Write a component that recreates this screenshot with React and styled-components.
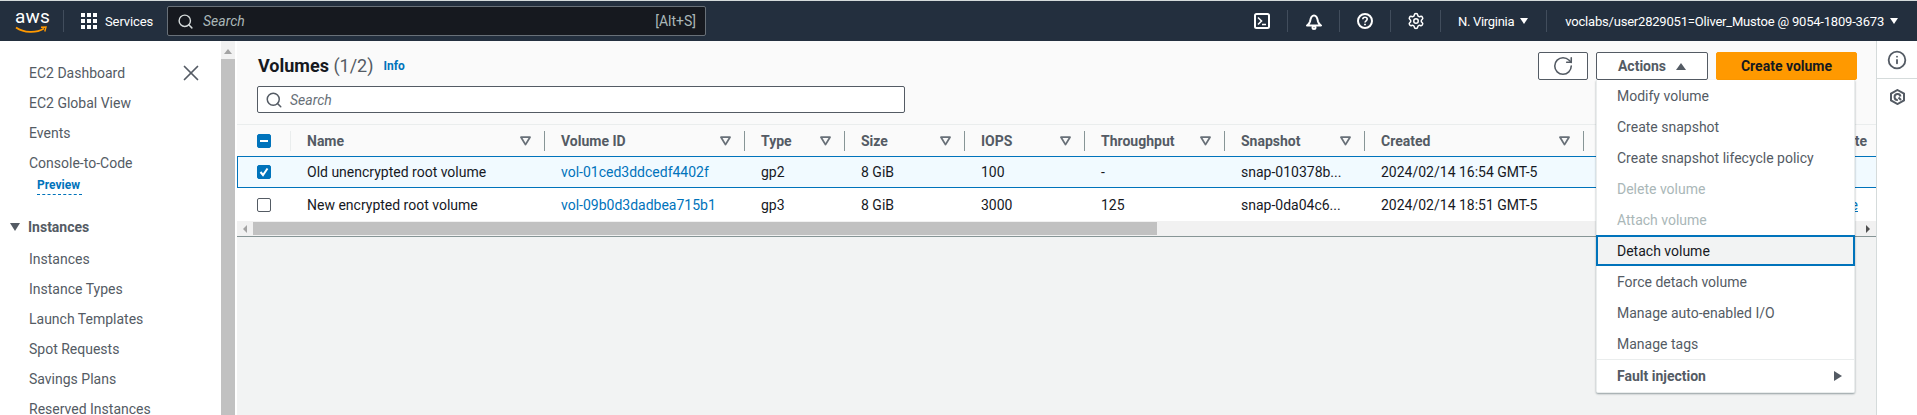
import React from "react";
import styled, { createGlobalStyle } from "styled-components";
import { Search, X, RotateCw, Settings, Info } from "lucide-react";

const GlobalStyle = createGlobalStyle`
  html, body {
    margin: 0;
    padding: 0;
    height: 415px;
    overflow: hidden;
    background: #fff;
    font-family: Roboto, "Liberation Sans", sans-serif;
    font-size: 14px;
    color: #16191f;
  }
`;

const Page = styled.div`
  display: flex;
  flex-direction: column;
  width: 1917px;
  height: 415px;
  overflow: hidden;
`;

const TopBar = styled.header`
  display: flex;
  align-items: center;
  height: 40px;
  margin-top: 1px;
  background: #232f3e;
  color: #fff;
  box-shadow: 0 -1px 0 #d5dbdb;
`;

const Logo = styled.div`
  position: relative;
  width: 32px;
  height: 28px;
  margin-left: 15px;
  font-size: 19px;
  line-height: 20px;
  letter-spacing: 0.2px;
  text-align: center;
  svg {
    position: absolute;
    left: 0;
    bottom: 1px;
  }
`;

const BarSep = styled.span`
  width: 1px;
  height: 22px;
  background: #414d5c;
  margin-left: 16px;
`;

const ServicesBtn = styled.div`
  display: flex;
  align-items: center;
  gap: 8px;
  margin-left: 17px;
  width: 69px;
  font-size: 13px;
  letter-spacing: -0.1px;
  white-space: nowrap;
`;

const GridDots = styled.div`
  display: grid;
  grid-template-columns: repeat(3, 4px);
  gap: 2px;
  span {
    width: 4px;
    height: 4px;
    background: #fff;
  }
`;

const GlobalSearch = styled.div`
  display: flex;
  align-items: center;
  box-sizing: border-box;
  width: 539px;
  height: 30px;
  margin-left: 17px;
  padding: 0 9px;
  background: #16191f;
  border: 1px solid #687078;
  border-radius: 2px;
  color: #aab7b8;
  em {
    margin-left: 9px;
    flex: 1;
  }
`;

const BarRight = styled.div`
  display: flex;
  align-items: center;
  margin-left: auto;
`;

const IconSlot = styled.div`
  display: flex;
  justify-content: center;
  align-items: center;
  width: ${(p) => p.$w}px;
  height: 22px;
  border-right: 1px solid #414d5c;
`;

const RegionText = styled.div`
  display: flex;
  align-items: center;
  gap: 6px;
  font-size: 13px;
  white-space: nowrap;
  padding: 0 ${(p) => p.$right}px 0 ${(p) => p.$left}px;
  letter-spacing: ${(p) => p.$track}px;
`;

const RegionSlot = styled(RegionText)`
  height: 22px;
  border-right: 1px solid #414d5c;
`;

const Caret = styled.span`
  width: 0;
  height: 0;
  border-left: 4px solid transparent;
  border-right: 4px solid transparent;
  border-top: 6px solid currentColor;
`;

const NavCaret = styled(Caret)`
  border-left-width: 5px;
  border-right-width: 5px;
  border-top-width: 8px;
`;

const Body = styled.div`
  display: flex;
  flex: 1;
  min-height: 0;
`;

const SideNav = styled.nav`
  width: 221px;
  flex-shrink: 0;
  box-sizing: border-box;
  padding-top: 17px;
  position: relative;
  color: #545b64;
  overflow: hidden;
`;

const NavItem = styled.div`
  height: 30px;
  line-height: 30px;
  padding-left: 29px;
`;

const Preview = styled.div`
  margin: -2px 0 17px 37px;
  height: 19px;
  line-height: 19px;
  width: 45px;
  box-sizing: border-box;
  font-size: 12px;
  font-weight: 700;
  color: #0073bb;
  border-bottom: 1px dashed #0073bb;
`;

const NavHead = styled.div`
  display: flex;
  align-items: center;
  height: 30px;
  gap: 8px;
  margin-bottom: 2px;
  padding-left: 10px;
  font-weight: 700;
  color: #545b64;
`;

const CloseBtn = styled.div`
  position: absolute;
  left: 178px;
  top: 19px;
  color: #545b64;
  line-height: 0;
`;

const VScroll = styled.div`
  width: 14px;
  flex-shrink: 0;
  margin-right: 2px;
  background: #f1f1f1;
  display: flex;
  flex-direction: column;
`;

const ArrowUp = styled.div`
  height: 18px;
  display: flex;
  justify-content: center;
  padding-top: 8px;
  box-sizing: border-box;
  &::before {
    content: "";
    border-left: 4px solid transparent;
    border-right: 4px solid transparent;
    border-bottom: 5px solid #a3a3a3;
    height: 0;
  }
`;

const VThumb = styled.div`
  flex: 1;
  background: #c1c1c1;
`;

const Main = styled.main`
  position: relative;
  flex: 1;
  min-width: 0;
  display: flex;
  flex-direction: column;
  background: #f2f3f3;
`;

const Heading = styled.section`
  box-sizing: border-box;
  height: 83px;
  padding: 11px 19px 0 20px;
  background: #fafafa;
`;

const TitleRow = styled.div`
  display: flex;
  align-items: flex-start;
  height: 34px;
`;

const Title = styled.h1`
  margin: 2px 0 0 1px;
  font-size: 18px;
  line-height: 24px;
  font-weight: 700;
  color: #16191f;
  span {
    font-weight: 400;
    color: #545b64;
  }
`;

const InfoLink = styled.a`
  margin: 7px 0 0 10px;
  font-size: 12px;
  font-weight: 700;
  color: #0073bb;
`;

const Buttons = styled.div`
  display: flex;
  margin-left: auto;
`;

const Button = styled.div`
  display: flex;
  align-items: center;
  justify-content: center;
  gap: 10px;
  box-sizing: border-box;
  height: 28px;
  width: ${(p) => p.$w}px;
  margin-left: ${(p) => p.$left || 0}px;
  border: 1px solid ${(p) => (p.$primary ? "#ff9900" : "#545b64")};
  border-radius: 2px;
  background: ${(p) => (p.$primary ? "#ff9900" : "#fff")};
  color: ${(p) => (p.$primary ? "#16191f" : "#545b64")};
  font-weight: 700;
`;

const CaretUp = styled.span`
  width: 0;
  height: 0;
  border-left: 5px solid transparent;
  border-right: 5px solid transparent;
  border-bottom: 7px solid #545b64;
`;

const SearchBox = styled.div`
  display: flex;
  align-items: center;
  box-sizing: border-box;
  width: 648px;
  height: 27px;
  padding: 0 7px;
  background: #fff;
  border: 1px solid #545b64;
  border-radius: 2px;
  color: #545b64;
  em {
    margin-left: 7px;
    color: #687078;
  }
`;

const Table = styled.div`
  overflow: hidden;
  background: #fff;
`;

const Row = styled.div`
  display: grid;
  grid-template-columns: 54px 254px 200px 100px 120px 120px 140px 140px 219px 1fr;
  align-items: center;
  box-sizing: border-box;
  height: ${(p) => p.$h}px;
`;

const HeadRow = styled(Row)`
  background: #fafafa;
  border-top: 1px solid #eaeded;
`;

const BodyRow = styled(Row)`
  background: ${(p) => (p.$selected ? "#f1faff" : "#fff")};
  border-top: ${(p) => (p.$selected ? "1px solid #0073bb" : "none")};
  border-bottom: ${(p) => (p.$selected ? "1px solid #0073bb" : "none")};
  box-shadow: ${(p) => (p.$selected ? "inset 1px 0 0 #0073bb" : "none")};
`;

const HeadCell = styled.div`
  display: flex;
  align-items: center;
  justify-content: space-between;
  height: 20px;
  padding: 0 13px 0 16px;
  font-weight: 700;
  color: #545b64;
  border-right: 1px solid #879596;
`;

const FirstHead = styled.div`
  display: flex;
  align-items: center;
  height: 20px;
  padding-left: 20px;
  border-right: 1px solid #eaeded;
`;

const LastHead = styled.div`
  text-align: right;
  padding-right: 9px;
  font-weight: 700;
  color: #545b64;
`;

const Cell = styled.div`
  padding-left: 16px;
  white-space: nowrap;
  overflow: hidden;
  color: #16191f;
`;

const LinkCell = styled(Cell)`
  color: #0073bb;
`;

const LastCell = styled(Cell)`
  text-align: right;
  padding-right: 18px;
  color: #0073bb;
  text-decoration: underline;
`;

const CheckCell = styled.div`
  padding-left: 20px;
  display: flex;
`;

const Check = styled.div`
  display: flex;
  align-items: center;
  justify-content: center;
  box-sizing: border-box;
  width: 14px;
  height: 14px;
  border-radius: 2px;
  border: 1px solid ${(p) => (p.$on ? "#0073bb" : "#545b64")};
  background: ${(p) => (p.$on ? "#0073bb" : "#fff")};
`;

const Dash = styled.span`
  width: 8px;
  height: 2px;
  background: #fff;
`;

const HScroll = styled.div`
  display: flex;
  align-items: center;
  justify-content: space-between;
  box-sizing: border-box;
  height: 16px;
  background: #f1f1f1;
  border-bottom: 1px solid #879596;
  position: relative;
`;

const HThumb = styled.div`
  position: absolute;
  left: 16px;
  top: 1px;
  width: 904px;
  height: 13px;
  background: #c1c1c1;
`;

const HArrow = styled.span`
  margin: 0 6px;
  width: 0;
  height: 0;
  border-top: 4px solid transparent;
  border-bottom: 4px solid transparent;
  border-${(p) => (p.$right ? "left" : "right")}: 4px solid ${(p) => (p.$right ? "#505050" : "#a3a3a3")};
`;

const Menu = styled.div`
  position: absolute;
  left: 1359px;
  top: 39px;
  width: 259px;
  box-sizing: border-box;
  background: #fff;
  border: 1px solid #eaeded;
  border-top: none;
  box-shadow: 0 1px 2px rgba(0, 28, 36, 0.4);
  border-radius: 0 0 2px 2px;
  padding-bottom: 1px;
`;

const MenuItem = styled.div`
  display: flex;
  align-items: center;
  justify-content: space-between;
  box-sizing: border-box;
  height: 31px;
  padding: 0 12px 0 ${(p) => (p.$focus ? 19 : 20)}px;
  color: ${(p) => (p.$disabled ? "#aab7b8" : "#545b64")};
  ${(p) => p.$focus && "background: #f2f3f3; color: #16191f; border: 2px solid #0073bb; margin: 0 -1px;"}
  ${(p) => p.$group && "font-weight: 700; border-top: 1px solid #eaeded; height: 32px;"}
`;

const MenuArrow = styled.span`
  width: 0;
  height: 0;
  border-top: 5px solid transparent;
  border-bottom: 5px solid transparent;
  border-left: 8px solid #545b64;
`;

const Rail = styled.aside`
  width: 41px;
  flex-shrink: 0;
  box-sizing: border-box;
  border-left: 1px solid #d5dbdb;
`;

const RailBtn = styled.div`
  display: flex;
  align-items: center;
  justify-content: center;
  height: ${(p) => p.$h}px;
  color: #545b64;
  border-bottom: ${(p) => (p.$line ? "1px solid #d5dbdb" : "none")};
`;

const navTop = ["EC2 Dashboard", "EC2 Global View", "Events", "Console-to-Code"];
const navInstances = ["Instances", "Instance Types", "Launch Templates", "Spot Requests", "Savings Plans", "Reserved Instances"];

const columns = ["Name", "Volume ID", "Type", "Size", "IOPS", "Throughput", "Snapshot", "Created"];

const rows = [
  { name: "Old unencrypted root volume", id: "vol-01ced3ddcedf4402f", type: "gp2", size: "8 GiB", iops: "100", tp: "-", snap: "snap-010378b...", created: "2024/02/14 16:54 GMT-5", last: "", selected: true },
  { name: "New encrypted root volume", id: "vol-09b0d3dadbea715b1", type: "gp3", size: "8 GiB", iops: "3000", tp: "125", snap: "snap-0da04c6...", created: "2024/02/14 18:51 GMT-5", last: "Available" },
];

const menuItems = [
  { label: "Modify volume" },
  { label: "Create snapshot" },
  { label: "Create snapshot lifecycle policy" },
  { label: "Delete volume", disabled: true },
  { label: "Attach volume", disabled: true },
  { label: "Detach volume", focus: true },
  { label: "Force detach volume" },
  { label: "Manage auto-enabled I/O" },
  { label: "Manage tags" },
];

const FilterIcon = () => (
  <svg width="11" height="10" viewBox="0 0 11 10">
    <path d="M1 1.2h9L5.5 8.6z" fill="none" stroke="#687078" strokeWidth="1.8" strokeLinejoin="round" />
  </svg>
);

const TerminalIcon = () => (
  <svg width="16" height="16" viewBox="0 0 16 16" fill="none" stroke="#fff" strokeWidth="2">
    <rect x="1" y="1" width="14" height="14" rx="1.5" />
    <path d="M4 4.5 7.5 8 4 11.5M8 11.5h4" strokeWidth="1.6" />
  </svg>
);

const BellIcon = () => (
  <svg width="16" height="17" viewBox="0 0 16 17" fill="none" stroke="#fff" strokeWidth="2" strokeLinejoin="round">
    <path d="M1 12.5c1.6-1 2.6-2 3-4 .4-2.6 1-6 4-6s3.6 3.4 4 6c.4 2 1.4 3 3 4z" />
    <circle cx="8" cy="14.5" r="1.5" />
  </svg>
);

const HelpIcon = () => (
  <svg width="16" height="16" viewBox="0 0 16 16" fill="none" stroke="#fff" strokeWidth="2">
    <circle cx="8" cy="8" r="7" />
    <path d="M5.8 6.2C5.8 4.9 6.8 4.2 8 4.2s2.2.8 2.2 1.9c0 1.7-2.2 1.7-2.2 3.5" strokeWidth="1.6" />
    <path d="M8 10.8v1.5" strokeWidth="1.8" />
  </svg>
);

const CheckMark = () => (
  <svg width="10" height="10" viewBox="0 0 10 10" fill="none" stroke="#fff" strokeWidth="2">
    <path d="M1.5 5 4 8 8.5 1.5" />
  </svg>
);

const HexIcon = () => (
  <svg width="15" height="16" viewBox="0 0 15 16" fill="none" stroke="#545b64" strokeWidth="2">
    <path d="M7.5 1 14 4.6v6.8L7.5 15 1 11.4V4.6z" />
    <path d="M10.5 7.5A3 3 0 1 0 7.8 11M8.5 8.5l2.5 2.5" />
  </svg>
);

export default function App() {
  return (
    <Page>
      <GlobalStyle />
      <TopBar>
        <Logo>
          aws
          <svg width="32" height="8" viewBox="0 0 32 8">
            <path d="M1 1.5C9 7 21 7.5 29 2.5" fill="none" stroke="#ff9900" strokeWidth="1.8" />
            <path d="M26 1.2 31 1l-1.2 4.5" fill="none" stroke="#ff9900" strokeWidth="1.4" />
          </svg>
        </Logo>
        <BarSep />
        <ServicesBtn>
          <GridDots>{Array.from({ length: 9 }, (_, i) => <span key={i} />)}</GridDots>
          Services
        </ServicesBtn>
        <GlobalSearch>
          <Search size={17} color="#d5dbdb" strokeWidth={2} />
          <em>Search</em>
          <span>[Alt+S]</span>
        </GlobalSearch>
        <BarRight>
          <IconSlot $w={50}><TerminalIcon /></IconSlot>
          <IconSlot $w={51}><BellIcon /></IconSlot>
          <IconSlot $w={50}><HelpIcon /></IconSlot>
          <IconSlot $w={49}><Settings size={18} color="#fff" strokeWidth={2} /></IconSlot>
          <RegionSlot $left={17} $right={18} $track={-0.3}>N. Virginia <Caret /></RegionSlot>
          <RegionText $left={18} $right={19} $track={-0.2}>voclabs/user2829051=Oliver_Mustoe @ 9054-1809-3673 <Caret /></RegionText>
        </BarRight>
      </TopBar>
      <Body>
        <SideNav>
          <CloseBtn><X size={26} strokeWidth={1.6} /></CloseBtn>
          {navTop.map((n) => <NavItem key={n}>{n}</NavItem>)}
          <Preview>Preview</Preview>
          <NavHead><NavCaret />Instances</NavHead>
          {navInstances.map((n) => <NavItem key={n}>{n}</NavItem>)}
        </SideNav>
        <VScroll>
          <ArrowUp />
          <VThumb />
        </VScroll>
        <Main>
          <Heading>
            <TitleRow>
              <Title>Volumes <span>(1/2)</span></Title>
              <InfoLink>Info</InfoLink>
              <Buttons>
                <Button $w={50}><RotateCw size={22} strokeWidth={1.7} /></Button>
                <Button $w={112} $left={8}>Actions <CaretUp /></Button>
                <Button $w={141} $left={8} $primary>Create volume</Button>
              </Buttons>
            </TitleRow>
            <SearchBox>
              <Search size={18} strokeWidth={2} />
              <em>Search</em>
            </SearchBox>
          </Heading>
          <Table>
            <HeadRow $h={32}>
              <FirstHead><Check $on><Dash /></Check></FirstHead>
              {columns.map((c) => (
                <HeadCell key={c}>{c}<FilterIcon /></HeadCell>
              ))}
              <LastHead>Volume state</LastHead>
            </HeadRow>
            {rows.map((r) => (
              <BodyRow key={r.id} $h={r.selected ? 32 : 33} $selected={r.selected}>
                <CheckCell>
                  <Check $on={r.selected}>{r.selected && <CheckMark />}</Check>
                </CheckCell>
                <Cell>{r.name}</Cell>
                <LinkCell>{r.id}</LinkCell>
                <Cell>{r.type}</Cell>
                <Cell>{r.size}</Cell>
                <Cell>{r.iops}</Cell>
                <Cell>{r.tp}</Cell>
                <Cell>{r.snap}</Cell>
                <Cell>{r.created}</Cell>
                <LastCell>{r.last}</LastCell>
              </BodyRow>
            ))}
            <HScroll>
              <HThumb />
              <HArrow />
              <HArrow $right />
            </HScroll>
          </Table>
          <Menu>
            {menuItems.map((m) => (
              <MenuItem key={m.label} $disabled={m.disabled} $focus={m.focus}>{m.label}</MenuItem>
            ))}
            <MenuItem $group>Fault injection <MenuArrow /></MenuItem>
          </Menu>
        </Main>
        <Rail>
          <RailBtn $h={37} $line><Info size={20} strokeWidth={2.2} /></RailBtn>
          <RailBtn $h={36}><HexIcon /></RailBtn>
        </Rail>
      </Body>
    </Page>
  );
}
